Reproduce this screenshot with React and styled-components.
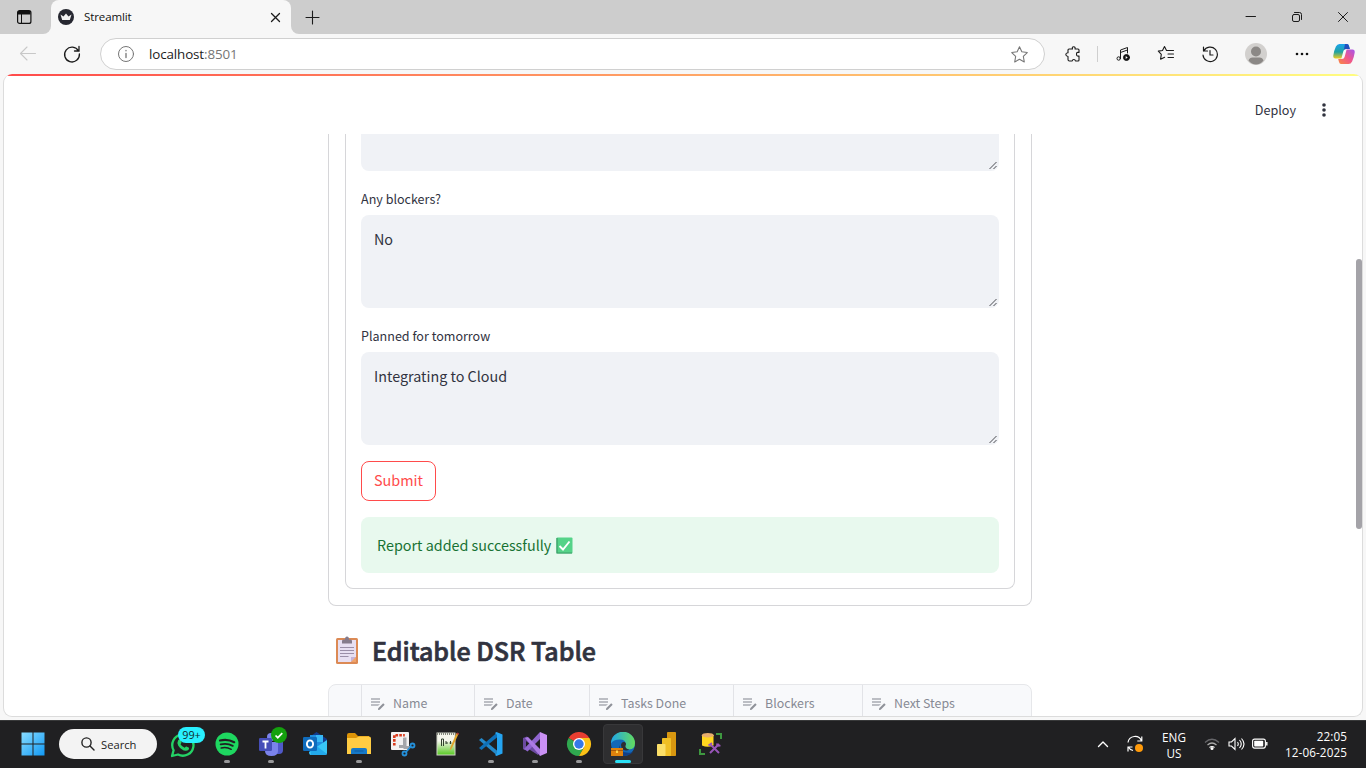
import React from "react";
import styled, { createGlobalStyle } from "styled-components";

const source = `"Noto Sans CJK SC", "Open Sans", sans-serif`;
const segoe = `"Open Sans", "Noto Sans", sans-serif`;

const GlobalStyle = createGlobalStyle`
  * { box-sizing: border-box; }
  body { margin: 0; overflow: hidden; background: #f7f7f7; }
  svg { display: block; flex: none; }
`;

const Desktop = styled.div`
  display: flex;
  flex-direction: column;
  width: 1366px;
  height: 768px;
  overflow: hidden;
  background: #f7f7f7;
  font-family: ${segoe};
`;

/* ---------- browser chrome ---------- */
const TabStrip = styled.div`
  display: flex;
  height: 34px;
`;
const TabActions = styled.div`
  width: 51px;
  background: #cdcdcd;
  border-bottom-right-radius: 8px;
  padding: 10px 0 0 17px;
`;
const TabHolder = styled.div`
  display: flex;
  background: linear-gradient(#cdcdcd 50%, #f7f7f7 50%);
`;
const Tab = styled.div`
  display: flex;
  align-items: center;
  width: 240px;
  padding: 0 10px 0 7px;
  background: #f7f7f7;
  border-radius: 8px 8px 0 0;
`;
const TabTitle = styled.span`
  flex: 1;
  padding-left: 10px;
  font-size: 11.5px;
  letter-spacing: -0.1px;
  line-height: 16px;
  color: #111;
`;
const StripRest = styled.div`
  flex: 1;
  display: flex;
  align-items: center;
  justify-content: space-between;
  padding: 0 17px 0 14px;
  background: #cdcdcd;
  border-bottom-left-radius: 8px;
`;
const Captions = styled.div`
  display: flex;
  align-items: center;
  gap: 34px;
`;
const Toolbar = styled.div`
  display: flex;
  align-items: center;
  height: 40px;
  padding-left: 18px;
`;
const AddressBar = styled.div`
  display: flex;
  align-items: center;
  width: 945px;
  height: 32px;
  margin-left: 18px;
  padding: 0 16px 0 16px;
  background: #fff;
  border: 1px solid #d0d0d0;
  border-radius: 16px;
`;
const Address = styled.span`
  flex: 1;
  padding-left: 14px;
  font-size: 13.4px;
  line-height: 18px;
  letter-spacing: -0.12px;
  color: #1b1b1b;
  span { color: #767676; }
`;
const ToolIcons = styled.div`
  display: flex;
  align-items: center;
  padding-left: 8px;
`;
const ToolSlot = styled.div`
  display: flex;
  justify-content: center;
  width: ${(p) => p.$w}px;
`;
const Divider = styled.div`
  width: 1px;
  height: 16px;
  background: #cfcfcf;
`;

/* ---------- streamlit page ---------- */
const PageFrame = styled.div`
  flex: 1;
  display: flex;
  padding: 0 3px 3px;
`;
const Page = styled.main`
  position: relative;
  flex: 1;
  display: flex;
  flex-direction: column;
  height: 643px;
  overflow: hidden;
  background: #fff;
  border: 1px solid #dcdcdc;
  border-top: 0;
  border-radius: 9px;
  font-family: ${source};
`;
const Decoration = styled.div`
  height: 2px;
  background: linear-gradient(90deg, #ff4b4b, #fffd80);
`;
const Header = styled.header`
  display: flex;
  justify-content: flex-end;
  align-items: center;
  gap: 26px;
  height: 58px;
  padding: 10px 36px 0 0;
`;
const Deploy = styled.span`
  font-size: 12.6px;
  line-height: 20px;
  color: #31333f;
`;
const Body = styled.div`
  flex: 1;
  display: flex;
  flex-direction: column;
  overflow: hidden;
  width: 704px;
  margin-left: 324px;
`;
const OuterCard = styled.div`
  flex: none;
  border: 1px solid #d6d6d9;
  border-top: 0;
  border-radius: 0 0 8px 8px;
  padding: 0 16px 16px;
`;
const Form = styled.form`
  display: flex;
  flex-direction: column;
  align-items: flex-start;
  height: 455px;
  border: 1px solid #d6d6d9;
  border-top: 0;
  border-radius: 0 0 8px 8px;
  padding: 0 15px;
`;
const AreaBox = styled.div`
  display: flex;
  justify-content: space-between;
  align-items: flex-end;
  width: 638px;
  height: ${(p) => p.$h}px;
  background: #f0f2f6;
  border-radius: ${(p) => (p.$cut ? "0 0 8px 8px" : "8px")};
`;
const AreaText = styled.span`
  align-self: flex-start;
  padding: 12px 0 0 13px;
  font-size: 14.35px;
  line-height: 24px;
  color: #31333f;
`;
const Label = styled.label`
  height: 44px;
  padding-top: 18px;
  font-size: 12.55px;
  line-height: 20px;
  color: #31333f;
`;
const SubmitButton = styled.button`
  width: 75px;
  height: 40px;
  margin: 16px 0;
  padding: 0 0 2px;
  background: #fff;
  border: 1px solid #ff4b4b;
  border-radius: 8px;
  font-family: ${source};
  font-size: 14.4px;
  line-height: 24px;
  color: #ff4b4b;
`;
const Success = styled.div`
  display: flex;
  align-items: center;
  gap: 5px;
  width: 638px;
  height: 56px;
  padding: 0 16px;
  background: #e8f9ee;
  border-radius: 8px;
  font-size: 14.35px;
  line-height: 24px;
  color: #177233;
`;
const Title = styled.h2`
  flex: none;
  display: flex;
  align-items: center;
  gap: 13px;
  height: 78px;
  margin: 0;
  padding: 9px 0 0 7px;
  font-size: 25px;
  font-weight: 500;
  -webkit-text-stroke: 0.7px #31333f;
  line-height: 34px;
  color: #31333f;
`;
const Table = styled.div`
  flex: none;
  display: flex;
  height: 60px;
  background: #f8f9fb;
  border: 1px solid #e6e7ea;
  border-radius: 8px 8px 0 0;
`;
const HeadCell = styled.div`
  display: flex;
  gap: 8px;
  width: ${(p) => p.$w}px;
  height: 60px;
  padding: 9px 0 0 9px;
  border-right: ${(p) => (p.$last ? "0" : "1px solid #e2e3e7")};
  font-size: 12.4px;
  line-height: 18px;
  color: #878a94;
  svg { margin-top: 4px; }
`;
const ScrollThumb = styled.div`
  position: absolute;
  right: 0;
  top: 185px;
  width: 6px;
  height: 270px;
  border-radius: 3px;
  background: #a4a3a8;
`;

/* ---------- taskbar ---------- */
const Taskbar = styled.footer`
  display: flex;
  height: 48px;
  flex: none;
  padding-left: 10px;
  background: #202022;
  box-shadow: inset 0 1px 0 #38393a;
  color: #fff;
`;
const Slot = styled.div`
  position: relative;
  display: flex;
  justify-content: center;
  width: 44px;
  height: 48px;
  padding-top: 12px;
`;
const StartButton = styled(Slot)`
  padding-left: 1px;
`;
const ActiveTile = styled.div`
  display: flex;
  justify-content: center;
  width: 40px;
  height: 40px;
  margin-top: -8px;
  padding-top: 7px;
  background: #2e2e30;
  border: 1px solid #38383a;
  border-radius: 4px;
`;
const Running = styled.div`
  position: absolute;
  bottom: 5px;
  left: ${(p) => (p.$active ? 14 : 19)}px;
  width: ${(p) => (p.$active ? 16 : 6)}px;
  height: 3px;
  border-radius: 2px;
  background: ${(p) => (p.$active ? "#2be0f5" : "#98989a")};
`;
const Badge = styled.div`
  position: absolute;
  left: 17px;
  top: 7px;
  width: 27px;
  height: 16px;
  border-radius: 8px;
  background: #29f0ff;
  color: #10282b;
  font-size: 10.8px;
  line-height: 16px;
  text-align: center;
`;
const TeamsStatus = styled.div`
  position: absolute;
  left: 22px;
  top: 7px;
`;
const SearchPill = styled.div`
  display: flex;
  align-items: center;
  gap: 6px;
  width: 98px;
  height: 30px;
  margin: 9px 4px 0 5px;
  padding-left: 22px;
  border-radius: 15px;
  background: #f3f3f3;
  color: #222;
  font-size: 11.2px;
`;
const Tray = styled.div`
  flex: 1;
  display: flex;
  align-items: center;
  justify-content: flex-end;
  padding-right: 19px;
`;
const TrayText = styled.div`
  width: ${(p) => p.$w}px;
  margin: 0 ${(p) => p.$r || 0}px 0 0;
  padding-top: ${(p) => p.$t || 0}px;
  text-align: ${(p) => p.$align};
  font-size: 11.7px;
  line-height: 16px;
  letter-spacing: ${(p) => p.$track || 0}px;
  white-space: nowrap;
`;
const TrayIcons = styled.div`
  display: flex;
  align-items: center;
  gap: ${(p) => p.$gap}px;
  margin-right: ${(p) => p.$r}px;
`;

const Line = ({ size = 16, w = 1, color = "#1b1b1b", children, vb }) => (
  <svg width={size} height={size} viewBox={vb || `0 0 ${size} ${size}`} fill="none" stroke={color}
    strokeWidth={w} strokeLinecap="round" strokeLinejoin="round">{children}</svg>
);

const Grip = () => (
  <svg width="11" height="11" viewBox="0 0 11 11" stroke="#4b4c52" strokeWidth="1">
    <path d="M1.500 9 8.500 2M5.500 9 8.500 6" />
  </svg>
);
const EditIcon = () => (
  <svg width="14" height="13" viewBox="0 0 14 13">
    <path d="M0 0h9v2H0zM0 3h9v2H0zM0 6h9l-2 2H0z" fill="#bcbec4" />
    <path d="m7 12 .2-1.800 5-5 1.500 1.500-5 5z" fill="#8f9299" />
  </svg>
);
const Clipboard = () => (
  <svg width="24" height="30" viewBox="0 0 24 30">
    <rect x="1" y="3" width="22" height="26" rx="1.5" fill="#dc8a55" />
    <path d="M3 5h18v17l-5 5H3z" fill="#e7dff2" />
    <path d="M21 22h-5v5z" fill="#c5b2d8" /><path d="M21 22v5h-5z" fill="#efa36c" />
    <path d="M5 12.500h14M5 15.500h14M5 18.500h14M5 21.500h8.500" stroke="#9b8fa9" />
    <path d="M7 8.500V6Q7 4.500 8.500 4.500H10q0-3 2-3t2 3h1.500Q17 4.500 17 6v2.500z" fill="#857b8c" />
  </svg>
);
const CheckMark = () => (
  <svg width="17" height="17" viewBox="0 0 17 17">
    <rect x=".5" y=".5" width="16" height="16" rx="1" fill="#55d388" />
    <path d="M1 1v15h15" fill="none" stroke="#3c9c68" strokeWidth="1.2" />
    <path d="m3.500 9 3.500 3.500 6.500-8" fill="none" stroke="#fff" strokeWidth="1.900" />
  </svg>
);

const Copilot = () => (
  <svg width="22" height="22" viewBox="0 0 22 22">
    <defs>
      <linearGradient id="cpa" x1="0" y1="0" x2="0" y2="1"><stop stopColor="#1ba4ee" /><stop offset=".55" stopColor="#21a2a0" /><stop offset="1" stopColor="#f2cb1d" /></linearGradient>
      <linearGradient id="cpb" x1="1" y1="0" x2="0" y2="1"><stop stopColor="#a554ee" /><stop offset=".5" stopColor="#f0568b" /><stop offset="1" stopColor="#fa8b40" /></linearGradient>
    </defs>
    <path d="M6.500 1H14q1.500 0 2 2l.8 3H13q-2 0-2.600 2L8.400 15.500H2.500Q0 15.500.3 12.500q.7-5 2.600-9Q4.100 1 6.500 1z" fill="url(#cpa)" />
    <path d="M12 1h2q1.500 0 2 2l.8 3H13q-1.500 0-2.200 1z" fill="#214fbe" />
    <path d="M15.500 21H8q-1.500 0-2-2l-.8-3H9q2 0 2.600-2l2-7.500h5.900q2.500 0 2.200 3-.7 5-2.600 9Q17.900 21 15.500 21z" fill="url(#cpb)" />
  </svg>
);

const Windows = () => (
  <svg width="24" height="24" viewBox="0 0 24 24">
    <defs><linearGradient id="win" x1="0" y1="0" x2="1" y2="1"><stop stopColor="#88dcff" /><stop offset="1" stopColor="#1199f5" /></linearGradient></defs>
    <path d="M.5.500h11v11H.5zM12.500.500h11v11h-11zM.5 12.500h11v11H.5zM12.500 12.500h11v11h-11z" fill="url(#win)" />
  </svg>
);
const WhatsApp = () => (
  <svg width="26" height="26" viewBox="0 0 26 26">
    <path d="M2 24 3.600 18.200A10.600 10.600 0 1 1 8 22.500z" fill="none" stroke="#24d366" strokeWidth="2.300" strokeLinejoin="round" />
    <path d="M8.200 8.200q1.600-2 2.500.1l.8 2q.2.700-1 1.900 1.600 2.700 4.200 3.600 1.300-1.600 1.800-1.400l2.500 1.300q.3 3-3.200 3.100-4.300-.4-7.500-5.100-1.700-3-.1-5.500z" fill="#24d366" />
  </svg>
);
const Spotify = () => (
  <svg width="24" height="24" viewBox="0 0 24 24">
    <circle cx="12" cy="12" r="11.500" fill="#1ed760" />
    <g fill="none" stroke="#202022" strokeLinecap="round"><path d="M5 8.500q7.500-2 14.200 1.700" strokeWidth="2.200" /><path d="M5.600 12.400q6.600-1.700 12.200 1.500" strokeWidth="1.800" /><path d="M6.200 16q5.500-1.300 10 1.300" strokeWidth="1.500" /></g>
  </svg>
);
const Teams = () => (
  <svg width="28" height="26" viewBox="0 0 28 26">
    <circle cx="14" cy="5" r="4" fill="#7b83eb" /><circle cx="22" cy="7" r="3" fill="#5059c9" />
    <path d="M18 10h8v8q0 4-4 4h-4z" fill="#5059c9" /><path d="M8 10h13v9q0 5-6.500 5T8 19z" fill="#7b83eb" />
    <rect x="2" y="6" width="13" height="13" rx="1.200" fill="#464eb8" />
    <path d="M5.500 9.500h6M8.500 9.500v7" stroke="#fff" strokeWidth="1.800" />
  </svg>
);
const Outlook = () => (
  <svg width="26" height="24" viewBox="0 0 26 24">
    <path d="M6 6 14.500 0 25 7v14q0 2-2 2H8z" fill="#123b8d" />
    <path d="M8 3h13v12H8z" fill="#1f8ee0" /><path d="M14 3h7v7h-7z" fill="#36b8f5" />
    <path d="m7 20 18-12v13q0 2-2 2H9q-2 0-2-3z" fill="#38c7f7" /><path d="m12 12 13 10q-.5 1-2 1H9l-1-8z" fill="#1ca0e8" opacity=".75" />
    <rect x="1" y="5" width="14" height="14" rx="1.200" fill="#0f6cbd" />
    <ellipse cx="8" cy="12" rx="3.100" ry="3.600" fill="none" stroke="#fff" strokeWidth="1.900" />
  </svg>
);
const Folder = () => (
  <svg width="26" height="24" viewBox="0 0 26 24">
    <path d="M1 3q0-2 2-2h6l3 3h11v6H1z" fill="#dd9407" />
    <path d="M1 6h9l3-1.500h10q2 0 2 2V22H1z" fill="#ffcc43" />
    <path d="M5 22v-4q0-2 2-2h12q2 0 2 2v4z" fill="#1679c8" /><path d="M8.500 19h9" stroke="#0e5b9d" />
  </svg>
);
const Snip = () => (
  <svg width="26" height="26" viewBox="0 0 26 26">
    <rect x="1" y="0" width="18" height="18" rx="1" fill="#f3f2f2" />
    <path d="M4.300 13.500V3.300h10.500" fill="none" stroke="#d83b1d" strokeWidth="2.600" strokeDasharray="2.600 1.200" />
    <path d="M9 14.500h5.500V6M15 5.500v10h5" fill="none" stroke="#a4a6aa" strokeWidth="3" />
    <g fill="none" stroke="#2490da" strokeWidth="1.800"><circle cx="22.500" cy="13.500" r="2" /><circle cx="14.500" cy="21.500" r="2" /><path d="m16 20 4.500-5" /></g>
  </svg>
);
const Notepad = () => (
  <svg width="24" height="26" viewBox="0 0 24 26">
    <defs><linearGradient id="npp" x1="0" y1="0" x2="0" y2="1"><stop offset=".35" stopColor="#f5f6ec" /><stop offset="1" stopColor="#55c820" /></linearGradient></defs>
    <rect x="2" y="1" width="18" height="22" fill="url(#npp)" stroke="#cfd3c8" /><path d="M2 2h18" stroke="#84877d" strokeDasharray="1 1" strokeWidth="2" />
    <path d="M6.500 14V7h2v7M11 11h2M11 9v3M14.500 11h2M15.500 9v3" fill="none" stroke="#31412e" />
    <path d="m14.500 19 1-4L21.500 1l2 1-6.500 14z" fill="#e1a52d" /><path d="m21.500 2 .8-1.500 1.700.8-.5 1.700z" fill="#a93535" />
  </svg>
);
const VSCode = () => (
  <svg width="26" height="24" viewBox="0 1 26 24">
    <path d="m1 9 2.500-2 16 13-1 4z" fill="#2489ca" /><path d="m1 17 2.500 2 16-13-1-4z" fill="#0e70b8" />
    <path d="m18.500 1 6 2.600v18.800l-6 2.600-1.500-1 2-2V4l-2-2z" fill="#25a5f2" />
  </svg>
);
const VisualStudio = () => (
  <svg width="26" height="24" viewBox="0 1 26 24">
    <path d="m1 7 4-1.500L17 20l-1 4L5 17l-2.500 2L1 18z" fill="#6b4aa0" /><path d="M4 10v6l4-3z" fill="#202022" />
    <path d="M2 18 18 1l1 6L5.500 20.500z" fill="#9065cf" /><path d="m3 7 3-1 13 13-1 6z" fill="#ac7be4" />
    <path d="m18 1 7 3v18l-7 3z" fill="#ca91f5" />
  </svg>
);
const Chrome = () => (
  <svg width="26" height="24" viewBox="0 1 26 24">
    <path d="M13 13 2.600 7A12 12 0 0 1 23.400 7z" fill="#e73e31" />
    <path d="M13 13 2.600 7A12 12 0 0 0 13 25l5.200-9z" fill="#2fa84f" />
    <path d="M13 7h10.400A12 12 0 0 1 13 25l5.200-9z" fill="#fbc116" />
    <circle cx="13" cy="13" r="6" fill="#fff" /><circle cx="13" cy="13" r="4.700" fill="#3479e9" />
  </svg>
);
const Edge = () => (
  <svg width="26" height="24" viewBox="0 1 26 24">
    <defs><linearGradient id="edg"><stop stopColor="#20a6e8" /><stop offset="1" stopColor="#64dc5c" /></linearGradient></defs>
    <circle cx="13" cy="13" r="12" fill="#1268b8" />
    <path d="M1 12.500a12 11.500 0 0 1 24-.5q0 6.500-6 6.500-5.500 0-3.500-4 1-6-5.500-6-7 0-9 4z" fill="url(#edg)" />
    <path d="M9.500 14q0 9 12 7.500l2-1q-4 4.500-10.500 4.500-6-3-3.500-11z" fill="#123f86" /><path d="M11 14q.5-3.500 3.500-3 2.500 1 .8 4 .5 3.300 4.200 3.500-3.500 2-6.500 0-2-1.500-2-4.500z" fill="#2e2e30" />
    <rect x="1" y="17" width="12" height="8" fill="#df820d" /><path d="M1 19.500h12" stroke="#a8590a" /><rect x="6" y="19.500" width="2" height="2.500" fill="#ffd64a" />
  </svg>
);
const PowerBI = () => (
  <svg width="22" height="24" viewBox="0 1 22 24">
    <rect x="11" y="1" width="9" height="24" rx=".8" fill="#d89710" /><rect x="6" y="7" width="9" height="18" rx=".8" fill="#f0bf25" /><rect x="1" y="13" width="8.500" height="12" rx=".8" fill="#fbdf68" />
  </svg>
);
const SqlTool = () => (
  <svg width="26" height="26" viewBox="0 0 26 26">
    <path d="M4 3v10.500q5.500 2.500 11.500 0V3z" fill="#ffd61f" /><ellipse cx="9.800" cy="3.200" rx="5.900" ry="2.300" fill="#e7ad6c" />
    <path d="M18 2h5v5M2 17v5h5" fill="none" stroke="#3e9840" strokeWidth="2" />
    <path d="m12 12 9 9M21 12l-9 9" stroke="#9855b9" strokeWidth="2" /><path d="M10.500 13.500 14 11M19 11.500q0 3 3.500 2" fill="none" stroke="#9855b9" strokeWidth="1.800" />
  </svg>
);

const apps = [
  { icon: <WhatsApp />, badge: "99+" },
  { icon: <Spotify />, run: true },
  { icon: <Teams />, run: true, status: true },
  { icon: <Outlook /> },
  { icon: <Folder />, run: true },
  { icon: <Snip /> },
  { icon: <Notepad /> },
  { icon: <VSCode />, run: true },
  { icon: <VisualStudio />, run: true },
  { icon: <Chrome />, run: true },
  { icon: <Edge />, run: true, active: true },
  { icon: <PowerBI /> },
  { icon: <SqlTool /> },
];

const columns = [["Name", 113], ["Date", 115], ["Tasks Done", 144], ["Blockers", 129], ["Next Steps", 168]];

const star = "M8 .8l2.200 4.700 5.100.7-3.700 3.600.9 5.200L8 12.500 3.500 15l.9-5.200L.7 6.200l5.100-.7z";

export default function App() {
  return (
    <Desktop>
      <GlobalStyle />
      <TabStrip>
        <TabActions>
          <svg width="15" height="14" viewBox="0 0 15 14"><rect x=".6" y=".6" width="13.300" height="12.800" rx="2" fill="none" stroke="#111" strokeWidth="1.200" /><path d="M1 1h12.500v3.500H1z" fill="#111" /><path d="M4.500 4v9" stroke="#111" /></svg>
        </TabActions>
        <TabHolder>
          <Tab>
            <svg width="16" height="16" viewBox="0 0 16 16"><circle cx="8" cy="8" r="8" fill="#262730" /><path d="m2.500 5.500 3 2L8 4.500l2.500 3 3-2-1.700 5.500H4.200z" fill="#f2f2f2" /></svg>
            <TabTitle>Streamlit</TabTitle>
            <Line size={11} w={1.3}><path d="M1.500 1.500l8 8M9.500 1.500l-8 8" /></Line>
          </Tab>
        </TabHolder>
        <StripRest>
          <Line size={15} w={1.1}><path d="M7.500 1v13M1 7.500h13" /></Line>
          <Captions>
            <Line size={12}><path d="M1 5.500h9.500" /></Line>
            <Line size={12}><rect x="1.500" y="3.500" width="7" height="7" rx="1.500" /><path d="M3.500 1.500h5q2 0 2 2v5" /></Line>
            <Line size={12}><path d="M1.500 1.500l9 9M10.500 1.500l-9 9" /></Line>
          </Captions>
        </StripRest>
      </TabStrip>

      <Toolbar>
        <Line size={20} color="#c8c8c8" w={1.1}><path d="M17.500 9.500H2.500M9 3 2.500 9.500 9 16" /></Line>
        <svg width="44" height="20" viewBox="0 0 44 20" fill="none" stroke="#1b1b1b" strokeWidth="1.300" strokeLinecap="round"><path d="M40.500 7A7.400 7.400 0 1 0 41.400 10M41 2.500V7h-4.500" /></svg>
        <AddressBar>
          <Line size={18} color="#767676"><circle cx="9" cy="9" r="7.500" /><path d="M9 8.500v4M9 5.500v.3" strokeWidth="1.300" /></Line>
          <Address>localhost<span>:8501</span></Address>
          <Line size={17} color="#767676" vb="0 0 16 16"><path d={star} /></Line>
        </AddressBar>
        <ToolIcons>
          <ToolSlot $w={40}><Line size={17} w={1.1}><path d="M4 3h3.500Q6.800.8 8.700.8T10 3h3q1 0 1 1v2.500q-2.500-.7-2.500 1.700T14 10v4q0 1-1 1h-2.500q-.3-1.500-1.700-1.500T7.200 15H4.500q-1.500 0-1.500-1.500V10.500Q.8 10 .8 8.500T3 6.800V4q0-1 1-1z" /></Line></ToolSlot>
          <ToolSlot $w={9}><Divider /></ToolSlot>
          <ToolSlot $w={42}><Line size={16} w={1}><path d="M5.500 12V4l7-2.500V7M5.500 6.500l7-2.500" /><circle cx="3.700" cy="12.500" r="1.700" /><circle cx="11.500" cy="11.500" r="3" fill="#111" /><path d="m10.700 10 2 1.500-2 1.500z" fill="#fff" stroke="none" /></Line></ToolSlot>
          <ToolSlot $w={44}><Line size={18} w={1.1}><path d="M9.500 5.500 7.500 1.500l-2 4-4.200.6 3 3.200-.7 4.900 4-2M9.500 5.500h7M11 9h5.500M11 12.500h5.500" /></Line></ToolSlot>
          <ToolSlot $w={44}><Line size={18} w={1.2}><path d="M2.500 2v4h4M2.800 6A7.200 7.200 0 1 1 2 10M9 5.500V10h3" /></Line></ToolSlot>
          <ToolSlot $w={48}><svg width="22" height="22" viewBox="0 0 22 22"><circle cx="11" cy="11" r="11" fill="#d2d0ce" /><circle cx="11" cy="8.500" r="5" fill="#8b8886" /><path d="M3.500 17.500q1-3 4-3h7q3 0 4 3-3 4-7.500 4t-7.500-4z" fill="#8b8886" /></svg></ToolSlot>
          <ToolSlot $w={44}><svg width="14" height="4" viewBox="0 0 14 4" fill="#111"><circle cx="2" cy="2" r="1.300" /><circle cx="7" cy="2" r="1.300" /><circle cx="12" cy="2" r="1.300" /></svg></ToolSlot>
          <ToolSlot $w={40}><Copilot /></ToolSlot>
        </ToolIcons>
      </Toolbar>

      <PageFrame>
        <Page>
          <Decoration />
          <Header>
            <Deploy>Deploy</Deploy>
            <svg width="4" height="14" viewBox="0 0 4 14" fill="#31333f"><circle cx="2" cy="2" r="1.800" /><circle cx="2" cy="7" r="1.800" /><circle cx="2" cy="12" r="1.800" /></svg>
          </Header>
          <Body>
            <OuterCard>
              <Form>
                <AreaBox $h={37} $cut><AreaText /><Grip /></AreaBox>
                <Label>Any blockers?</Label>
                <AreaBox $h={93}><AreaText>No</AreaText><Grip /></AreaBox>
                <Label>Planned for tomorrow</Label>
                <AreaBox $h={93}><AreaText>Integrating to Cloud</AreaText><Grip /></AreaBox>
                <SubmitButton type="button">Submit</SubmitButton>
                <Success>Report added successfully <CheckMark /></Success>
              </Form>
            </OuterCard>
            <Title><Clipboard />Editable DSR Table</Title>
            <Table>
              <HeadCell $w={33} />
              {columns.map(([name, w], i) => (
                <HeadCell key={name} $w={w} $last={i === columns.length - 1}><EditIcon />{name}</HeadCell>
              ))}
            </Table>
          </Body>
          <ScrollThumb />
        </Page>
      </PageFrame>

      <Taskbar>
        <StartButton><Windows /></StartButton>
        <SearchPill><Line size={14} w={1.4} color="#222"><circle cx="5.500" cy="5.500" r="4.600" /><path d="m9 9 4 4" /></Line>Search</SearchPill>
        {apps.map((a, i) => (
          <Slot key={i}>
            {a.active ? <ActiveTile>{a.icon}</ActiveTile> : a.icon}
            {a.badge && <Badge>{a.badge}</Badge>}
            {a.status && <TeamsStatus><svg width="16" height="16" viewBox="0 0 16 16"><circle cx="8" cy="8" r="8" fill="#14a10e" /><path d="m4.500 8.500 2.300 2.200 4.500-4.500" fill="none" stroke="#fff" strokeWidth="1.700" /></svg></TeamsStatus>}
            {a.run && <Running $active={a.active} />}
          </Slot>
        ))}
        <Tray>
          <TrayIcons $gap={17} $r={17}>
            <Line size={12} w={1.4} color="#fff"><path d="m1.500 8.500 4.500-4.500 4.500 4.500" /></Line>
            <svg width="18" height="18" viewBox="0 0 18 18" fill="none" stroke="#fff" strokeWidth="1.200"><path d="M2 7.500A7 7 0 0 1 15.500 6M15.800 1.500V6h-4.500M7 15.500Q3.500 14.500 2.500 12M2 16.500V12h4.500" /><circle cx="13" cy="13" r="4" fill="#ff9a0a" stroke="none" /></svg>
          </TrayIcons>
          <TrayText $w={26} $align="center" $r={17} $t={2}>ENG<br />US</TrayText>
          <TrayIcons $gap={7.5} $r={16}>
            <svg width="16" height="14" viewBox="0 0 16 14" fill="none" strokeWidth="1.200"><path d="M1 5.500q7-6.500 14 0" stroke="#66666a" /><path d="M3.500 8q4.500-4 9 0" stroke="#aaa" /><path d="M5.500 10.500q2.500-2 5 0" stroke="#fff" /><circle cx="8" cy="11.500" r="1.500" fill="#fff" /></svg>
            <svg width="17" height="14" viewBox="0 0 17 14" fill="none" stroke="#fff" strokeWidth="1.100"><path d="M1 5h2.500L7 1.500v11L3.500 9H1zM9.500 5q1.500 2 0 4M11.500 3q3.500 4 0 8M13.500 1.500q5 5.500 0 11" /></svg>
            <svg width="16" height="12" viewBox="0 0 16 12"><rect x=".6" y="1.100" width="12.800" height="9" rx="2" fill="none" stroke="#fff" strokeWidth="1.100" /><rect x="2.200" y="2.700" width="9" height="5.800" rx=".8" fill="#fff" /><path d="M14.800 4v3.500" stroke="#fff" strokeWidth="1.400" /></svg>
          </TrayIcons>
          <TrayText $w={63} $align="right" $track={0.1}>22:05<br />12-06-2025</TrayText>
        </Tray>
      </Taskbar>
    </Desktop>
  );
}
